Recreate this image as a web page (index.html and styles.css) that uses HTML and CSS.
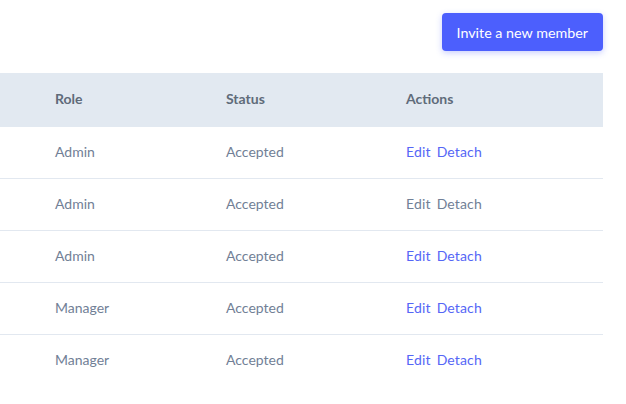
FILE: index.html
```html
<!DOCTYPE html>
<html lang="en">
<head>
  <meta charset="UTF-8">
  <meta name="viewport" content="width=device-width, initial-scale=1.0">
  <title>Team members</title>
  <link rel="stylesheet" href="styles.css">
</head>
<body>
  <div class="page">
    <div class="toolbar">
      <button class="btn btn-primary">Invite a new member</button>
    </div>

    <table class="members">
      <thead>
        <tr>
          <th class="col-role">Role</th>
          <th class="col-status">Status</th>
          <th>Actions</th>
        </tr>
      </thead>
      <tbody>
        <tr>
          <td class="col-role">Admin</td>
          <td class="col-status">Accepted</td>
          <td><a href="#" class="action">Edit</a><a href="#" class="action">Detach</a></td>
        </tr>
        <tr>
          <td class="col-role">Admin</td>
          <td class="col-status">Accepted</td>
          <td><a href="#" class="action muted">Edit</a><a href="#" class="action muted">Detach</a></td>
        </tr>
        <tr>
          <td class="col-role">Admin</td>
          <td class="col-status">Accepted</td>
          <td><a href="#" class="action">Edit</a><a href="#" class="action">Detach</a></td>
        </tr>
        <tr>
          <td class="col-role">Manager</td>
          <td class="col-status">Accepted</td>
          <td><a href="#" class="action">Edit</a><a href="#" class="action">Detach</a></td>
        </tr>
        <tr>
          <td class="col-role">Manager</td>
          <td class="col-status">Accepted</td>
          <td><a href="#" class="action">Edit</a><a href="#" class="action">Detach</a></td>
        </tr>
      </tbody>
    </table>
  </div>
</body>
</html>
```

FILE: styles.css
```css
:root {
  --primary-color: #4c5ffd;
  --link-color: #5566f6;
  --text-color: #718096;
  --head-color: #5f6b7a;
  --head-bg: #e2e9f1;
  --border-color: #e2e8f0;
}

body {
  margin: 0;
  font-family: 'Lato', 'Open Sans', sans-serif;
  background-color: #fff;
  color: var(--text-color);
}

.page {
  width: 603px;
}

.toolbar {
  display: flex;
  justify-content: flex-end;
  padding: 13px 0 22px;
}

.btn {
  height: 38px;
  padding: 0 15px;
  border-radius: 4px;
  font-family: inherit;
  font-size: 14.3px;
  cursor: pointer;
}

.btn-primary {
  background-color: var(--primary-color);
  color: #fff;
  border: none;
  box-shadow: 0 2px 6px rgba(76, 95, 253, 0.3);
}

.members {
  width: 100%;
  border-collapse: collapse;
  font-size: 14px;
}

.members th {
  background-color: var(--head-bg);
  color: var(--head-color);
  font-weight: 700;
  text-align: left;
  height: 51px;
  padding: 0 0 3px;
}

.members td {
  height: 49px;
  padding: 0 0 2px;
  border-bottom: 1px solid var(--border-color);
}

.members tbody tr:last-child td {
  border-bottom: none;
}

.col-role {
  width: 171px;
  padding-left: 55px !important;
}

.col-status {
  width: 180px;
}

.action {
  color: var(--link-color);
  text-decoration: none;
  letter-spacing: 0.15px;
}

.action + .action {
  margin-left: 6px;
}

.action.muted {
  color: var(--text-color);
}
```
